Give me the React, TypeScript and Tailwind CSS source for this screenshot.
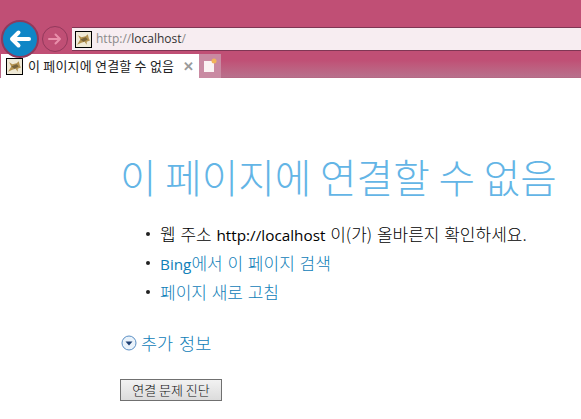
const Favicon = () => (
  <div className="w-[17px] h-[17px] shrink-0 border border-black bg-white flex items-center justify-center">
    <svg width="15" height="15" viewBox="0 0 14 14">
      <rect width="14" height="14" fill="#efe9d6" />
      <path d="M1 12 L4 7 L2 3 L5 5 L9 4 L11 2 L12 6 L13 8 L10 9 L10 12 L8 9 L5 10 Z" fill="#b3924f" />
      <path d="M4 7 L9 5 L11 7 L7 9 Z" fill="#75623a" />
    </svg>
  </div>
);

const Toolbar = () => (
  <div className="h-[78px] bg-[#c04f75] relative border-b border-[#b56a85]">
    <div className="absolute left-0 right-0 bottom-0 h-[17px] bg-gradient-to-b from-[#c04f75] to-[#b8708c]" />
    <div className="relative flex items-center h-[54px] pt-[24px] pl-[1px]">
      <button className="w-[38px] h-[38px] rounded-full bg-[#0f86c6] border-2 border-[#8e3a5c] flex items-center justify-center relative z-10">
        <svg width="24" height="20" viewBox="0 0 24 20" fill="none" stroke="white" strokeWidth="4" strokeLinecap="round" strokeLinejoin="round">
          <path d="M21 10H4M10.5 3.5 4 10l6.5 6.5" />
        </svg>
      </button>
      <button className="ml-[3px] w-[26px] h-[26px] rounded-full bg-[#c04f75] border border-[#93395c] flex items-center justify-center">
        <svg width="16" height="14" viewBox="0 0 16 14" fill="none" stroke="#e98fab" strokeWidth="2" strokeLinecap="round" strokeLinejoin="round">
          <path d="M2 7h11M8.5 2.5 13 7l-4.5 4.5" />
        </svg>
      </button>
      <div className="ml-[4px] flex-1 h-[24px] bg-[#f7edf1] border-y border-[#7f3654] flex items-center pl-[3px] text-[12px] text-[#8a8a8a] font-['Open_Sans','Noto_Sans_CJK_KR',sans-serif]">
        <Favicon />
        <span className="ml-[4px]">http://<span className="text-[#333]">localhost</span>/</span>
      </div>
    </div>
    <div className="relative flex h-[24px] pl-[1px]">
      <div className="w-[198px] h-[24px] bg-white flex items-center pl-[5px] text-[13px] text-[#222] font-['Noto_Sans_CJK_KR',sans-serif]">
        <Favicon />
        <span className="ml-[5px] tracking-[0.2px] whitespace-nowrap">이 페이지에 연결할 수 없음</span>
        <span className="ml-[9px] text-[#9a9a9a] text-[13px] font-bold">✕</span>
      </div>
      <div className="w-[22px] h-[24px] bg-[#c98aa2] flex items-center justify-center">
        <svg width="16" height="16" viewBox="0 0 16 16">
          <path d="M2 3h10v11H2z" fill="#fbf3f3" />
          <circle cx="12" cy="3" r="2.5" fill="#f2b45a" />
        </svg>
      </div>
    </div>
  </div>
);

const Latin = ({ children }: { children: string }) => (
  <span className="text-[15.3px] font-normal leading-none font-['Open_Sans',sans-serif]">{children}</span>
);

const Bullet = () => (
  <span className="w-[14px] flex items-center">
    <span className="w-[4px] h-[4px] rounded-full bg-[#222]" />
  </span>
);

export default function App() {
  return (
    <div className="w-[581px] h-[419px] bg-white overflow-hidden font-['Noto_Sans_CJK_KR',sans-serif]">
      <Toolbar />
      <main className="pl-[120px] pt-[72px]">
        <h1 className="text-[39.7px] leading-[52px] font-light text-[#63b5e6] whitespace-nowrap">
          이 페이지에 연결할 수 없음
        </h1>
        <ul className="mt-[17px] pl-[26px] text-[17px] font-light [word-spacing:1px] list-none">
          <li className="flex h-[29px] leading-[29px] text-black whitespace-nowrap">
            <Bullet />
            <span>웹 주소 <Latin>http://localhost</Latin> 이(가) 올바른지 확인하세요.</span>
          </li>
          <li className="flex h-[29px] leading-[29px] text-[#1080b8] whitespace-nowrap">
            <Bullet />
            <span><Latin>Bing</Latin>에서 이 페이지 검색</span>
          </li>
          <li className="flex h-[29px] leading-[29px] text-[#1080b8] whitespace-nowrap">
            <Bullet />
            <span>페이지 새로 고침</span>
          </li>
        </ul>
        <div className="mt-[26px] pl-[1px] flex items-center gap-[4px] text-[17.5px] font-light [word-spacing:2px] leading-[22px] text-[#1080b8]">
          <svg width="16" height="16" viewBox="0 0 16 16">
            <circle cx="8" cy="8" r="7" fill="#eaf3fb" stroke="#5b8fc4" />
            <path d="M4.5 6.5h7L8 10.5z" fill="#1d3f73" />
          </svg>
          <span>추가 정보</span>
        </div>
        <button className="mt-[25px] w-[102px] h-[22px] border border-[#707070] bg-gradient-to-b from-[#f2f2f2] to-[#dcdcdc] text-[13px] font-light text-[#111] flex items-center justify-center">
          연결 문제 진단
        </button>
      </main>
    </div>
  );
}
